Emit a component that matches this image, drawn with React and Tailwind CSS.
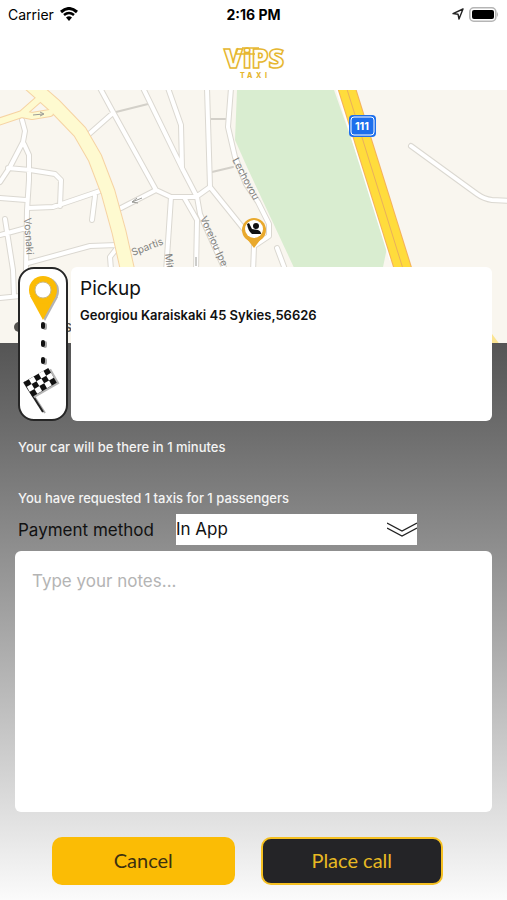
import { useState } from 'react';

const STREETS = [
  'M22 30 L25 41 L23 52 L10 77 L0 92',
  'M24 54 L29 65 L29 90 L27 120 L26 180',
  'M8 78 L30 80 L55 84 L61 90 L60 116',
  'M0 108 L26 110',
  'M28 118 L53 117 L100 101',
  'M95 106 L92 130',
  'M5 129 L13 180 L14 206',
  'M0 145 L26 138',
  'M0 208 L30 205',
  'M28 173 L90 156 L117 155',
  'M117 158 L110 167 L111 180',
  'M88 45 L113 23',
  'M100 -2 L113 22 L156 100 L171 107 L196 107 L210 97',
  'M143 -2 L183 80 L197 107 L200 124 L226 182',
  'M168 -2 L181 35 L182 78',
  'M185 109 L197 130 L196 182',
  'M207 -2 L210 97 L247 143',
  'M231 -2 L228 37 L235 67 L246 94 L258 112 L269 134 L269 146 L254 156 L253 182',
  'M156 100 L121 118',
  'M171 107 L166 182',
  'M277 158 L286 182',
  'M411 56 L477 104 Q484 109 492 110 L510 111',
].join(' ');

const PATHS = 'M116 22 L148 14 M211 29 L228 29 M212 82 L233 77 M258 155 L268 146';
const AVENUE = 'M30 -6 L55 16 L80 42 L95 68 L108 102 L119 142 L128 182';
const AVENUE_SIDE = 'M-2 32 L22 24 L39 9 M22 24 L32 26 L50 23';
const HIGHWAY = 'M346 -4 L404 182';

function Map() {
  return (
    <svg
      viewBox="0 0 507 253"
      preserveAspectRatio="xMidYMin slice"
      className="block h-[253px] w-full bg-[#f9f6ef]"
      role="img"
      aria-label="Pickup map"
    >
      <g fill="none" strokeLinecap="round" strokeLinejoin="round">
        <path d={PATHS} stroke="#d3d0c9" strokeWidth="2" />
        <path d={STREETS} stroke="#dbd8d1" strokeWidth="6" />
        <path d={STREETS} stroke="#ffffff" strokeWidth="4" />
        <path d={AVENUE_SIDE} stroke="#f6d3a3" strokeWidth="8" />
        <path d={AVENUE} stroke="#f6d3a3" strokeWidth="15" />
        <path d={AVENUE_SIDE} stroke="#fefad0" strokeWidth="6" />
        <path d={AVENUE} stroke="#fefad0" strokeWidth="13" />
      </g>
      <path d="M237 0 H334 L388 153 L382 182 H296 L247 77 L235 50 Z" fill="#d9edd0" />
      <g fill="none">
        <path d="M337 -2 L391 170" stroke="#ffffff" strokeWidth="3" />
        <path d={HIGHWAY} stroke="#f5b15b" strokeWidth="18" />
        <path d={HIGHWAY} stroke="#ffdc3c" strokeWidth="16" />
        <path d={HIGHWAY} stroke="#eab05c" strokeWidth="1" />
        <path d="M484 240 L496 256" stroke="#fbe491" strokeWidth="8" />
      </g>
      <g fill="none" stroke="#9a9a95" strokeWidth="1">
        <path d="M33 25 L43 24 M40 22 L44 24 L40 26" />
        <path d="M142 108 L132 112 M137 108 L132 112 L138 113" />
        <path d="M196 167 V176" />
      </g>

      <g fill="#82827e" className="font-['Inter',sans-serif] text-[10px]">
        <text transform="translate(24 128) rotate(86)">Vosnaki</text>
        <text transform="translate(133 166) rotate(-21)">Spartis</text>
        <text transform="translate(165 164) rotate(84)">Mitr</text>
        <text transform="translate(200 128) rotate(66)">Voreiou Ipe</text>
        <text transform="translate(232 70) rotate(62)">Lechovou</text>
      </g>

      <rect x="349" y="25" width="27" height="22" rx="4" fill="#1d6fec" />
      <rect x="351" y="27" width="23" height="18" rx="3" fill="#1d6fec" stroke="#ffffff" strokeWidth="1" />
      <text x="362" y="40" textAnchor="middle" fill="#ffffff" className="font-['Inter',sans-serif] text-[11px] font-bold">
        111
      </text>

      <path d="M254 158 L244 145 H264 Z" fill="#e9a92d" />
      <circle cx="254" cy="140" r="12" fill="#e9a92d" />
      <circle cx="254" cy="139" r="9" fill="#ffffff" />
      <circle cx="256" cy="136" r="3" fill="#111111" />
      <path d="M247 134 L249 133 L252 139 L258 140 Q261 141 261 144 H252 Q248 141 247 134 Z" fill="#111111" />

      <circle cx="19" cy="237" r="5" fill="#55534f" />
      <text x="72" y="242" textAnchor="end" fill="#55534f" className="font-['Inter',sans-serif] text-[15px] font-medium">
        Maps
      </text>
    </svg>
  );
}

function StatusBar() {
  return (
    <div className="grid h-7 grid-cols-3 items-center px-2 text-[14px] text-black">
      <div className="flex items-center gap-[6px]">
        <span>Carrier</span>
        <svg viewBox="0 0 18 14" className="h-[14px] w-[18px]" aria-hidden="true">
          <path d="M1 5 Q9 -2 17 5" fill="none" stroke="#000" strokeWidth="3" />
          <path d="M4 8 Q9 4 14 8" fill="none" stroke="#000" strokeWidth="2.6" />
          <path d="M6 10.5 Q9 8 12 10.5 L9 14 Z" fill="#000" />
        </svg>
      </div>
      <span className="text-center font-bold">2:16 PM</span>
      <div className="flex items-center justify-end gap-[5px]">
        <svg viewBox="0 0 12 12" className="h-3 w-3" aria-hidden="true">
          <path d="M11 1 L1 5.6 L6 6.2 L7 11 Z" fill="none" stroke="#222" strokeWidth="1.4" strokeLinejoin="round" />
        </svg>
        <svg viewBox="0 0 30 15" className="h-[15px] w-[30px]" aria-hidden="true">
          <rect x="0.8" y="0.8" width="26" height="13.4" rx="4" fill="#fff" stroke="#b5b5b5" strokeWidth="1.6" />
          <rect x="3" y="3" width="22" height="9" rx="2" fill="#000" />
          <path d="M28 5 Q30 7.5 28 10 Z" fill="#b5b5b5" />
        </svg>
      </div>
    </div>
  );
}

function Logo() {
  return (
    <svg viewBox="0 0 90 38" className="h-[38px] w-[90px] overflow-visible" role="img" aria-label="ViPS Taxi">
      <text
        x="45"
        y="26"
        textAnchor="middle"
        fill="#fffdf5"
        stroke="#e6b62f"
        strokeWidth="1.5"
        className="font-['Open_Sans',sans-serif] text-[27px] font-extrabold"
      >
        ViPS
      </text>
      <path d="M29 6 L27 12 H46 M33 6 H50" fill="none" stroke="#e6b62f" strokeWidth="1.3" />
      <g fill="#e6b62f" className="font-['Inter',sans-serif] text-[7px] font-extrabold">
        <text x="31" y="36">T</text>
        <text x="38" y="36">A</text>
        <text x="47" y="36">X</text>
        <text x="56" y="36">I</text>
      </g>
    </svg>
  );
}

// white squares of the flag, [column, row]
const CELLS = [0, 1, 2].flatMap((row) =>
  [0, 1, 2, 3, 4].filter((col) => (col + row) % 2 === 1).map((col) => [col, row])
);

function RouteStrip() {
  return (
    <div className="flex w-[50px] shrink-0 justify-center rounded-2xl border-2 border-[#262626] bg-white">
      <svg viewBox="0 0 46 150" className="h-[150px] w-[46px]" aria-hidden="true">
        <g fill="#b3b3b3" transform="translate(2 1)">
          <path d="M23 51 L10 27 H36 Z" />
          <circle cx="23" cy="21" r="14" />
        </g>
        <path d="M23 51 L10 27 H36 Z" fill="#fbbc05" />
        <circle cx="23" cy="21" r="14" fill="#fbbc05" />
        <circle cx="23" cy="21" r="8" fill="#ffffff" stroke="#c9b98a" strokeWidth="1" />
        <g fill="#aaaaaa">
          <rect x="23" y="54" width="4" height="7" rx="2" />
          <rect x="23" y="72" width="4" height="7" rx="2" />
          <rect x="23" y="89" width="4" height="7" rx="2" />
        </g>
        <g fill="#111111">
          <rect x="21" y="53" width="4" height="7" rx="2" />
          <rect x="21" y="71" width="4" height="7" rx="2" />
          <rect x="21" y="88" width="4" height="7" rx="2" />
        </g>
        <path d="M14 127 L25 144" stroke="#aaaaaa" strokeWidth="2" />
        <path d="M4 113 L23 143" stroke="#222222" strokeWidth="2" />
        <g transform="translate(4 113) rotate(-30)">
          <rect x="1" y="2" width="29" height="17" fill="#b5b5b5" />
          <rect width="28" height="17" fill="#111111" />
          {CELLS.map(([col, row]) => (
            <rect key={`${col}-${row}`} x={col * 5.6} y={row * 5.6} width="5.6" height="5.6" fill="#ffffff" />
          ))}
        </g>
      </svg>
    </div>
  );
}

export default function App() {
  const [method, setMethod] = useState('In App');
  const [notes, setNotes] = useState('');

  return (
    <div className="flex min-h-screen flex-col bg-white font-['Inter',sans-serif]">
      <header className="flex flex-col">
        <StatusBar />
        <div className="flex h-[62px] items-start justify-center pt-[14px]">
          <Logo />
        </div>
      </header>

      <Map />

      <main className="flex flex-1 flex-col bg-linear-to-b from-[#555555] to-[#fbfbfb]">
        <section className="-mt-[76px] flex gap-[3px] pr-[15px] pl-[18px]">
          <RouteStrip />
          <div className="flex-1 rounded-md bg-white px-[9px] pt-2">
            <h1 className="text-[19px] leading-7 text-[#111111]">Pickup</h1>
            <p className="mt-1 text-[13px] leading-4 font-semibold text-[#111111]">
              Georgiou Karaiskaki 45 Sykies,56626
            </p>
          </div>
        </section>

        <div className="px-[18px] text-[13px] leading-4 font-medium text-[#f4f4f4]">
          <p className="mt-[18px]">Your car will be there in 1 minutes</p>
          <p className="mt-[35px]">You have requested 1 taxis for 1 passengers</p>
        </div>

        <div className="mt-2 flex items-center gap-[22px] pl-[18px]">
          <label htmlFor="method" className="text-[17px] leading-6 text-[#111111]">
            Payment method
          </label>
          <div className="relative w-[241px]">
            <select
              id="method"
              value={method}
              onChange={(e) => setMethod(e.target.value)}
              className="block h-[31px] w-full appearance-none bg-white text-[17px] text-[#111111]"
            >
              <option>In App</option>
              <option>Cash</option>
            </select>
            <svg
              viewBox="0 0 30 16"
              className="pointer-events-none absolute top-2 right-0 h-4 w-[30px]"
              fill="none"
              stroke="#222222"
              strokeWidth="1.4"
              aria-hidden="true"
            >
              <path d="M0 1 L15 9 L30 1 M0 6 L15 14 L30 6" />
            </svg>
          </div>
        </div>

        <textarea
          aria-label="Notes"
          placeholder="Type your notes..."
          value={notes}
          onChange={(e) => setNotes(e.target.value)}
          className="mx-[15px] mt-[6px] min-h-40 flex-1 resize-none rounded-md bg-white px-[17px] py-[18px] text-[17px] leading-6 text-[#111111] placeholder:text-[#b4b4b4]"
        />

        <div className="mt-[25px] mb-[15px] grid grid-cols-2 gap-[26px] pr-16 pl-[52px] font-['Lato',sans-serif] text-[20px]">
          <button type="button" className="h-12 rounded-[10px] bg-[#fbbc05] pb-[2px] text-[#3b3010]">
            Cancel
          </button>
          <button type="button" className="h-12 rounded-[10px] border-2 border-[#f5c022] bg-[#242427] pb-[2px] text-[#e8b923]">
            Place call
          </button>
        </div>
      </main>
    </div>
  );
}
